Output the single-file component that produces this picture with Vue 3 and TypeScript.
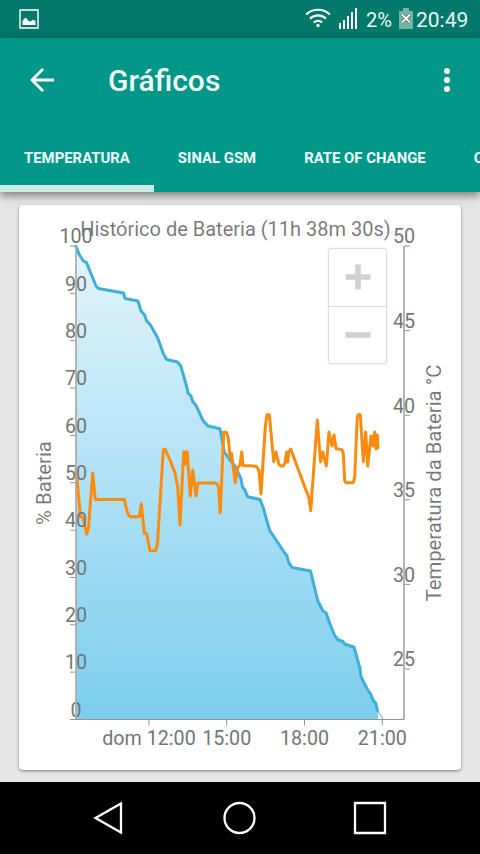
<script setup lang="ts">
import { ref } from 'vue'

type Point = [number, number]

const tabs = ['TEMPERATURA', 'SINAL GSM', 'RATE OF CHANGE', 'QUALIDADE']
const active = ref(0)

// plot area
const kLeft = 76
const kRight = 404
const kTop = 246
const kBottom = 719.5

const leftTicks = Array.from({ length: 11 }, (_, i) => ({
  label: 100 - i * 10,
  y: kTop + i * 47.35,
}))
const rightTicks = Array.from({ length: 6 }, (_, i) => ({
  label: 50 - i * 5,
  y: kTop + i * 84.6,
}))
const timeTicks = [
  { label: 'dom 12:00', x: 149 },
  { label: '15:00', x: 226.7 },
  { label: '18:00', x: 304.5 },
  { label: '21:00', x: 382.3 },
]

const battery: Point[] = [
  [76, 246.5], [79.5, 255], [83.5, 261], [86.5, 262.5], [96, 286], [98.5, 288.5],
  [123.5, 293], [125, 298.5], [138, 301], [141, 311], [144.5, 314.7], [146.7, 321],
  [150.5, 325], [157.7, 338], [163.5, 354], [166.7, 359.5], [177.5, 362], [180.7, 365.7],
  [187.3, 389], [188, 393], [191, 396], [193, 402], [196, 405.3], [203, 420.5],
  [208, 426], [220, 428.7], [224.3, 452], [230, 460], [235, 466], [241, 479],
  [242.5, 487], [245, 490], [247.5, 496.7], [260, 499.5], [263, 507], [269.5, 530],
  [284, 552], [287, 556], [288.5, 562], [292, 567.5], [310.5, 571], [317.7, 600.7],
  [323, 611], [326, 612.7], [330, 624], [334, 634], [337.5, 639.5], [343, 641.5],
  [345, 644.3], [354, 647], [360, 668.5], [361, 676.7], [367.5, 689.5], [370.7, 694],
  [373.5, 701], [375.5, 702.7], [377.5, 710.7],
]

const temperature: Point[] = [
  [76, 468.5], [80.5, 516.5], [83, 517.5], [86.7, 534], [88.5, 528], [92.7, 473],
  [95.3, 499.5], [124.3, 499.5], [127, 511], [128.7, 515.5], [130.7, 516.7], [139.3, 516.7],
  [141.3, 504], [144.3, 533], [146.7, 534], [150, 550.7], [155.7, 550.7], [157.5, 543],
  [163.3, 450], [165, 449], [170, 460], [175, 473], [177.7, 487], [180, 525],
  [183.7, 452], [184.7, 452], [185.5, 464], [186.3, 452], [187.2, 452], [190.3, 496],
  [192.7, 470], [196, 496], [198, 483], [215, 483], [217, 484], [218.5, 487],
  [220.3, 513], [223.7, 432.3], [226.3, 432.3], [228.3, 438], [230, 458], [231.5, 453.5],
  [235.3, 482.7], [237.5, 468], [240, 465], [241.7, 452], [243, 465.5], [254, 466],
  [257, 467], [259, 471], [261, 494], [265.3, 426.7], [267, 414.7], [269.3, 414.7],
  [273.7, 461.7], [276, 452], [279, 464.5], [281, 466], [283.3, 466], [285, 463],
  [286.7, 452], [287.7, 462], [288.7, 452], [290.7, 449], [309, 498.3], [310.7, 510.7],
  [317.3, 420], [320.5, 461.7], [322.7, 452], [326.3, 466], [329, 432], [332, 445.7],
  [334, 435], [336, 448.5], [341.7, 449.7], [343.3, 453.3], [344.7, 480.7], [346, 482.7],
  [353.3, 482.7], [354.7, 476.7], [357.3, 416.7], [358, 414.7], [360.3, 414.7],
  [363.3, 461.7], [365.7, 432], [367.7, 466], [371, 436], [373, 446], [374.7, 432],
  [376, 449], [377.3, 435], [378, 448],
]

function toPath(points: Point[]): string {
  return 'M' + points.map(p => p.join(' ')).join('L')
}

const batteryLine = toPath(battery)
const batteryArea = `${batteryLine}L378 712V${kBottom}H${kLeft}Z`
const temperatureLine = toPath(temperature)
</script>

<template>
  <div class="screen">
    <header class="status">
      <svg class="shot" viewBox="0 0 20 20">
        <path d="M1 1h18v18H1z" fill="none" stroke="#fff" stroke-width="1.4" />
        <path d="M3.5 16v-4l1.5-2 1.5-1.5L8 10l2 2.5 2.5-.5 1.5-1.5 2.5 1.5V16z" fill="#fff" />
      </svg>
      <svg class="wifi" viewBox="0 0 26 20" fill="none" stroke="#fff" stroke-width="2.2">
        <path d="M1.2 6.5a17 17 0 0 1 23.6 0M5 10.7a11.5 11.5 0 0 1 16 0M8.8 14.5a6.2 6.2 0 0 1 8.4 0" />
        <circle cx="13" cy="17.5" r="1.7" fill="#fff" stroke="none" />
      </svg>
      <svg class="signal" viewBox="0 0 19 21" fill="#fff">
        <path d="M0 15h2v6H0zM4 12h2v9H4zM8 8h2v13H8zM12 4h2v17h-2zM16 0h2v21h-2z" />
      </svg>
      <span class="percent">2%</span>
      <svg class="cell" viewBox="0 0 14 21">
        <path d="M4 0h6v3h4v18H0V3h4z" fill="#73b3aa" />
        <path d="M3 6.5l8 8M11 6.5l-8 8" stroke="#52645f" stroke-width="3.4" />
        <path d="M3 6.5l8 8M11 6.5l-8 8" stroke="#fff" stroke-width="1.8" />
      </svg>
      <span class="clock">20:49</span>
    </header>

    <div class="appbar">
      <div class="toolbar">
        <svg class="back" viewBox="0 0 24 24" fill="none" stroke="#fff" stroke-width="2.8">
          <path d="M24 12H2M13 1L2 12l11 11" />
        </svg>
        <h1>Gráficos</h1>
        <svg class="more" viewBox="0 0 6 24" fill="#fff">
          <circle cx="3" cy="3" r="3" />
          <circle cx="3" cy="12" r="3" />
          <circle cx="3" cy="21" r="3" />
        </svg>
      </div>
      <nav class="tabs">
        <div v-for="(tab, i) in tabs" :key="tab" class="tab" :class="{ active: i === active }" @click="active = i">
          {{ tab }}
        </div>
      </nav>
    </div>

    <main>
      <section class="card">
        <svg class="chart" viewBox="19 205 442 565">
          <defs>
            <linearGradient id="fill" gradientUnits="userSpaceOnUse" x1="0" :y1="kTop" x2="0" :y2="kBottom">
              <stop offset="0" stop-color="#e4f5fc" />
              <stop offset="1" stop-color="#7bceed" />
            </linearGradient>
          </defs>
          <text x="235.5" y="236">Histórico de Bateria (11h 38m 30s)</text>
          <path :d="batteryArea" fill="url(#fill)" />
          <path d="M377.5 710.7L383.5 719.5" class="battery thin" />
          <path :d="batteryLine" class="battery" />
          <path :d="temperatureLine" class="temperature" />

          <g v-for="t in leftTicks" :key="'l' + t.label">
            <path class="tick" :d="`M${kLeft - 6} ${t.y}H${kLeft}`" />
            <text class="number" :x="kLeft" :y="t.y - 2.7">{{ t.label }}</text>
          </g>
          <g v-for="t in rightTicks" :key="'r' + t.label">
            <path class="tick" :d="`M${kRight} ${t.y}h6`" />
            <text class="number" :x="kRight" :y="t.y - 2.7">{{ t.label }}</text>
          </g>
          <g v-for="t in timeTicks" :key="t.label">
            <path class="tick" :d="`M${t.x} ${kBottom}v6`" />
            <text class="number" :x="t.x" y="745">{{ t.label }}</text>
          </g>
          <path class="axis" :d="`M${kLeft} ${kTop}V${kBottom}M${kRight} ${kTop}V${kBottom}`" />
          <path class="tick" :d="`M${kLeft - 6} ${kBottom}H${kRight}`" />

          <text class="caption" transform="translate(51 483) rotate(-90)">% Bateria</text>
          <text class="caption" transform="translate(441.3 483) rotate(-90)">Temperatura da Bateria °C</text>
        </svg>
        <div class="zoom">
          <button><svg viewBox="0 0 26 26"><path d="M.5 13h25M13 .5v25" /></svg></button>
          <button><svg viewBox="0 0 26 26"><path d="M.5 13h25" /></svg></button>
        </div>
      </section>
    </main>

    <footer>
      <svg viewBox="0 0 34 34"><path d="M3.5 17L29 2.5v29z" /></svg>
      <svg viewBox="0 0 34 34"><circle cx="16.5" cy="17" r="15" /></svg>
      <svg viewBox="0 0 34 34"><path d="M2 2h30v30H2z" /></svg>
    </footer>
  </div>
</template>

<style>
body {
  margin: 0;
  overflow: hidden;
}
</style>

<style scoped>
* {
  box-sizing: border-box;
}

.screen {
  width: 480px;
  height: 854px;
  display: flex;
  flex-direction: column;
  overflow: hidden;
  background: #e5e5e5;
  font-family: Roboto, "Liberation Sans", sans-serif;
}

svg {
  display: block;
  flex: none;
}

.status {
  height: 38px;
  flex: none;
  display: flex;
  align-items: flex-start;
  padding: 0 13px 0 19px;
  background: #00796b;
  color: #e8f7f5;
}

.shot {
  width: 20px;
  height: 20px;
  margin: 9px auto 0 0;
}

.wifi {
  width: 26px;
  height: 20px;
  margin: 8px 8px 0 0;
}

.signal {
  width: 19px;
  height: 21px;
  margin: 8px 8px 0 0;
}

.percent {
  width: 33px;
  font-size: 20px;
  line-height: 40px;
}

.cell {
  width: 14px;
  height: 21px;
  margin-top: 8px;
}

.clock {
  width: 54px;
  padding-left: 3px;
  font-size: 21px;
  line-height: 40px;
}

.appbar {
  height: 154px;
  flex: none;
  background: #009688;
  color: #f0fffd;
  box-shadow: 0 3px 9px rgba(0, 0, 0, .5);
  z-index: 1;
}

.toolbar {
  height: 84px;
  display: flex;
  align-items: center;
  padding: 0 30px;
}

.back {
  width: 24px;
  height: 24px;
}

h1 {
  flex: 1;
  margin: 0 0 0 54px;
  font-size: 30px;
  font-weight: 500;
}

.more {
  width: 6px;
  height: 24px;
}

.tabs {
  height: 70px;
  display: flex;
  overflow: hidden;
}

.tab {
  flex: none;
  padding: 0 24px;
  font-size: 14.9px;
  font-weight: 700;
  line-height: 72px;
}

.tab.active {
  box-shadow: inset 0 -7px #cceae7;
}

main {
  flex: 1;
  padding: 13px 19px 12px;
}

.card {
  position: relative;
  width: 442px;
  height: 565px;
  border-radius: 4px;
  background: #fff;
  box-shadow: 0 1px 3px rgba(0, 0, 0, .45);
}

.chart {
  width: 442px;
  height: 565px;
}

.chart text {
  font-size: 20px;
  fill: rgba(0, 0, 0, .54);
  text-anchor: middle;
}

.chart .number {
  font-size: 19.7px;
  fill: #727676;
}

.chart .caption {
  font-size: 20.3px;
}

.battery,
.temperature {
  fill: none;
  stroke: #3eaeda;
  stroke-width: 3;
  stroke-linejoin: round;
  stroke-linecap: round;
}

.battery.thin {
  stroke-width: 1;
}

.temperature {
  stroke: #fb8c0f;
}

.axis {
  stroke: #aaa;
  stroke-width: 1.7;
  fill: none;
}

.tick {
  stroke: #929292;
  stroke-width: 1;
}

.zoom {
  position: absolute;
  left: 309px;
  top: 43px;
  width: 59px;
  height: 116px;
  display: flex;
  flex-direction: column;
  border: 1px solid #ddd;
  border-radius: 3px;
  background: #fff;
  box-shadow: 0 0 2px rgba(0, 0, 0, .12);
}

.zoom button {
  flex: 1;
  display: flex;
  align-items: center;
  justify-content: center;
  padding: 0;
  border: 0;
  background: none;
}

.zoom button + button {
  border-top: 1px solid #ddd;
}

.zoom svg {
  width: 26px;
  height: 26px;
  stroke: #d0d0d0;
  stroke-width: 5.6;
}

footer {
  height: 72px;
  flex: none;
  display: flex;
  align-items: center;
  justify-content: space-between;
  padding: 0 93px 0 92px;
  background: #000;
}

footer svg {
  width: 34px;
  height: 34px;
  fill: none;
  stroke: #fff;
  stroke-width: 2.3;
}
</style>
